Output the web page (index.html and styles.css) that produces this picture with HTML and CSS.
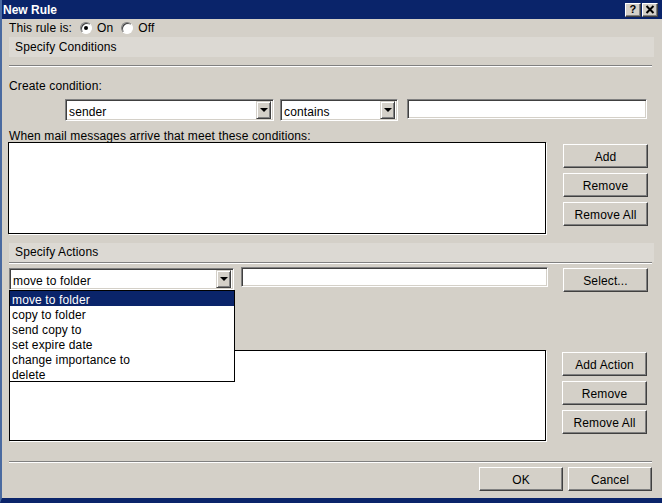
FILE: index.html
```html
<!DOCTYPE html>
<html>
<head>
<meta charset="utf-8">
<title>New Rule</title>
<link rel="stylesheet" href="styles.css">
</head>
<body>
<div class="win">
  <div class="titlebar">
    <span class="title">New Rule</span>
    <div class="tbtns">
      <span class="tbtn help">?</span>
      <span class="tbtn close"><svg width="10" height="9" viewBox="0 0 10 9"><path d="M1.5 1 L8.5 8 M8.5 1 L1.5 8" stroke="#000" stroke-width="2" fill="none"/></svg></span>
    </div>
  </div>
  <div class="body">
    <div class="rule-row">
      <span>This rule is:</span>
      <span class="radio on"></span><span class="rlabel">On</span>
      <span class="radio"></span><span class="rlabel">Off</span>
    </div>
    <div class="band">Specify Conditions</div>
    <div class="sep sep1"></div>
    <div class="label create">Create condition:</div>
    <div class="cond-row">
      <div class="select s-sender"><span class="val">sender</span><span class="arrow"><i></i></span></div>
      <div class="select s-contains"><span class="val">contains</span><span class="arrow"><i></i></span></div>
      <div class="field f-cond"></div>
    </div>
    <div class="label when">When mail messages arrive that meet these conditions:</div>
    <div class="list-row">
      <div class="listbox lb1"></div>
      <div class="btns">
        <div class="btn">Add</div>
        <div class="btn">Remove</div>
        <div class="btn">Remove All</div>
      </div>
    </div>
    <div class="band band2">Specify Actions</div>
    <div class="sep sep2"></div>
    <div class="act-row">
      <div class="select-wrap">
        <div class="select s-action"><span class="val">move to folder</span><span class="arrow"><i></i></span></div>
        <ul class="dropdown">
          <li class="sel">move to folder</li>
          <li>copy to folder</li>
          <li>send copy to</li>
          <li>set expire date</li>
          <li>change importance to</li>
          <li>delete</li>
        </ul>
      </div>
      <div class="field f-act"></div>
      <div class="btn b-select">Select...</div>
    </div>
    <div class="list-row list2">
      <div class="listbox lb2"></div>
      <div class="btns">
        <div class="btn">Add Action</div>
        <div class="btn">Remove</div>
        <div class="btn">Remove All</div>
      </div>
    </div>
    <div class="sep sep3"></div>
    <div class="foot">
      <div class="btn">OK</div>
      <div class="btn">Cancel</div>
    </div>
  </div>
</div>
</body>
</html>
```
FILE: styles.css
```css
* { box-sizing: border-box; }
html, body { margin: 0; padding: 0; }
body {
  font-family: "Liberation Sans", Arial, sans-serif;
  font-size: 12px;
  letter-spacing: 0.13px;
  color: #000;
  background: #d4d0c8;
}
.win {
  width: 662px;
  height: 503px;
  background: #d4d0c8;
  border-left: 2px solid #4a6aa0;
  border-bottom: 5px solid #0a246a;
  overflow: hidden;
}
.titlebar {
  height: 19px;
  margin-left: -2px;
  background: #0a246a;
  display: flex;
  align-items: center;
  justify-content: space-between;
  padding: 0 4px 0 3px;
}
.title {
  color: #fff;
  font-weight: bold;
  font-size: 12px;
  letter-spacing: 0;
}
.tbtns { display: flex; gap: 1px; }
.tbtn {
  width: 16px;
  height: 14px;
  background: #d4d0c8;
  border-top: 1px solid #fff;
  border-left: 1px solid #fff;
  border-right: 1px solid #404040;
  border-bottom: 1px solid #404040;
  box-shadow: inset -1px -1px 0 #808080;
  display: flex;
  align-items: center;
  justify-content: center;
  font-weight: bold;
  font-size: 11px;
  line-height: 1;
}
.body {
  padding-left: 7px;
}
.rule-row {
  margin-top: 1px;
  height: 15px;
  display: flex;
  align-items: center;
}
.radio {
  width: 12px;
  height: 12px;
  border-radius: 50%;
  background: #fff;
  border: 1px solid;
  border-color: #808080 #fff #fff #808080;
  box-shadow: inset 1px 1px 0 #404040;
  margin-left: 8px;
  position: relative;
}
.radio.on::after {
  content: "";
  position: absolute;
  left: 3px;
  top: 3px;
  width: 4px;
  height: 4px;
  border-radius: 50%;
  background: #000;
}
.rlabel { margin-left: 5px; }
.band {
  margin-top: 2px;
  height: 20px;
  width: 645px;
  background: #dcd9d3;
  line-height: 20px;
  padding-left: 6px;
}
.band2 { margin-top: 9px; height: 19px; line-height: 19px; }
.sep {
  width: 643px;
  height: 2px;
  border-top: 1px solid #808080;
  border-bottom: 1px solid #fff;
}
.sep1 { margin-top: 8px; }
.sep2 { margin-top: 0; }
.sep3 { margin-top: 20px; }
.label { line-height: 14px; }
.create { margin-top: 12px; }
.when { margin-top: 7px; padding-top: 1px; height: 14px; }
.cond-row {
  margin-top: 6px;
  display: flex;
  align-items: flex-start;
}
.select {
  height: 22px;
  background: #fff;
  border: 1px solid;
  border-color: #808080 #fff #fff #808080;
  box-shadow: inset 1px 1px 0 #404040, inset -1px -1px 0 #d4d0c8;
  display: flex;
  align-items: center;
  justify-content: space-between;
  padding: 2px 2px 2px 3px;
}
.select .val { line-height: 16px; padding-top: 3px; }
.arrow {
  width: 15px;
  height: 18px;
  background: #d4d0c8;
  border-top: 1px solid #d4d0c8;
  border-left: 1px solid #d4d0c8;
  border-right: 1px solid #404040;
  border-bottom: 1px solid #404040;
  box-shadow: inset 1px 1px 0 #fff, inset -1px -1px 0 #808080;
  display: flex;
  align-items: center;
  justify-content: center;
}
.arrow i {
  width: 0;
  height: 0;
  border-left: 4px solid transparent;
  border-right: 4px solid transparent;
  border-top: 4px solid #000;
}
.s-sender { margin-left: 56px; width: 209px; }
.s-contains { margin-left: 6px; width: 118px; }
.field {
  height: 20px;
  background: #fff;
  border: 1px solid;
  border-color: #808080 #fff #fff #808080;
  box-shadow: inset 1px 1px 0 #404040, inset -1px -1px 0 #d4d0c8;
}
.f-cond { margin-left: 9px; width: 240px; }
.list-row {
  display: flex;
  align-items: flex-start;
}
.listbox {
  background: #fff;
  border: 1px solid #000;
  box-shadow: 1px 1px 0 #fff;
}
.lb1 { margin-left: -1px; width: 538px; height: 92px; }
.btns {
  margin-left: 17px;
  margin-top: 2px;
  display: flex;
  flex-direction: column;
  gap: 5px;
}
.btn {
  width: 85px;
  height: 24px;
  padding-top: 2px;
  background: #d4d0c8;
  border-top: 1px solid #fff;
  border-left: 1px solid #fff;
  border-right: 1px solid #404040;
  border-bottom: 1px solid #404040;
  box-shadow: inset -1px -1px 0 #808080;
  display: flex;
  align-items: center;
  justify-content: center;
}
.act-row {
  margin-top: 3px;
  display: flex;
  align-items: flex-start;
}
.select-wrap { position: relative; }
.s-action { margin-top: 1px; width: 225px; height: 22px; }
.dropdown {
  position: absolute;
  left: 0;
  top: 23px;
  width: 226px;
  margin: 0;
  padding: 0;
  list-style: none;
  background: #fff;
  border: 1px solid #000;
  z-index: 5;
}
.dropdown li {
  height: 15px;
  line-height: 15px;
  padding-left: 2px;
  padding-top: 2px;
}
.dropdown li.sel {
  background: #0a246a;
  color: #fff;
}
.f-act { margin-left: 7px; width: 307px; }
.b-select { margin-left: 15px; margin-top: 1px; }
.list2 { margin-top: 58px; }
.lb2 { width: 537px; height: 91px; }
.list2 .btns { margin-left: 16px; margin-top: 2px; }
.foot {
  margin-top: 4px;
  display: flex;
  justify-content: flex-end;
  gap: 5px;
  padding-right: 10px;
}
.foot .btn { width: 84px; }
```
